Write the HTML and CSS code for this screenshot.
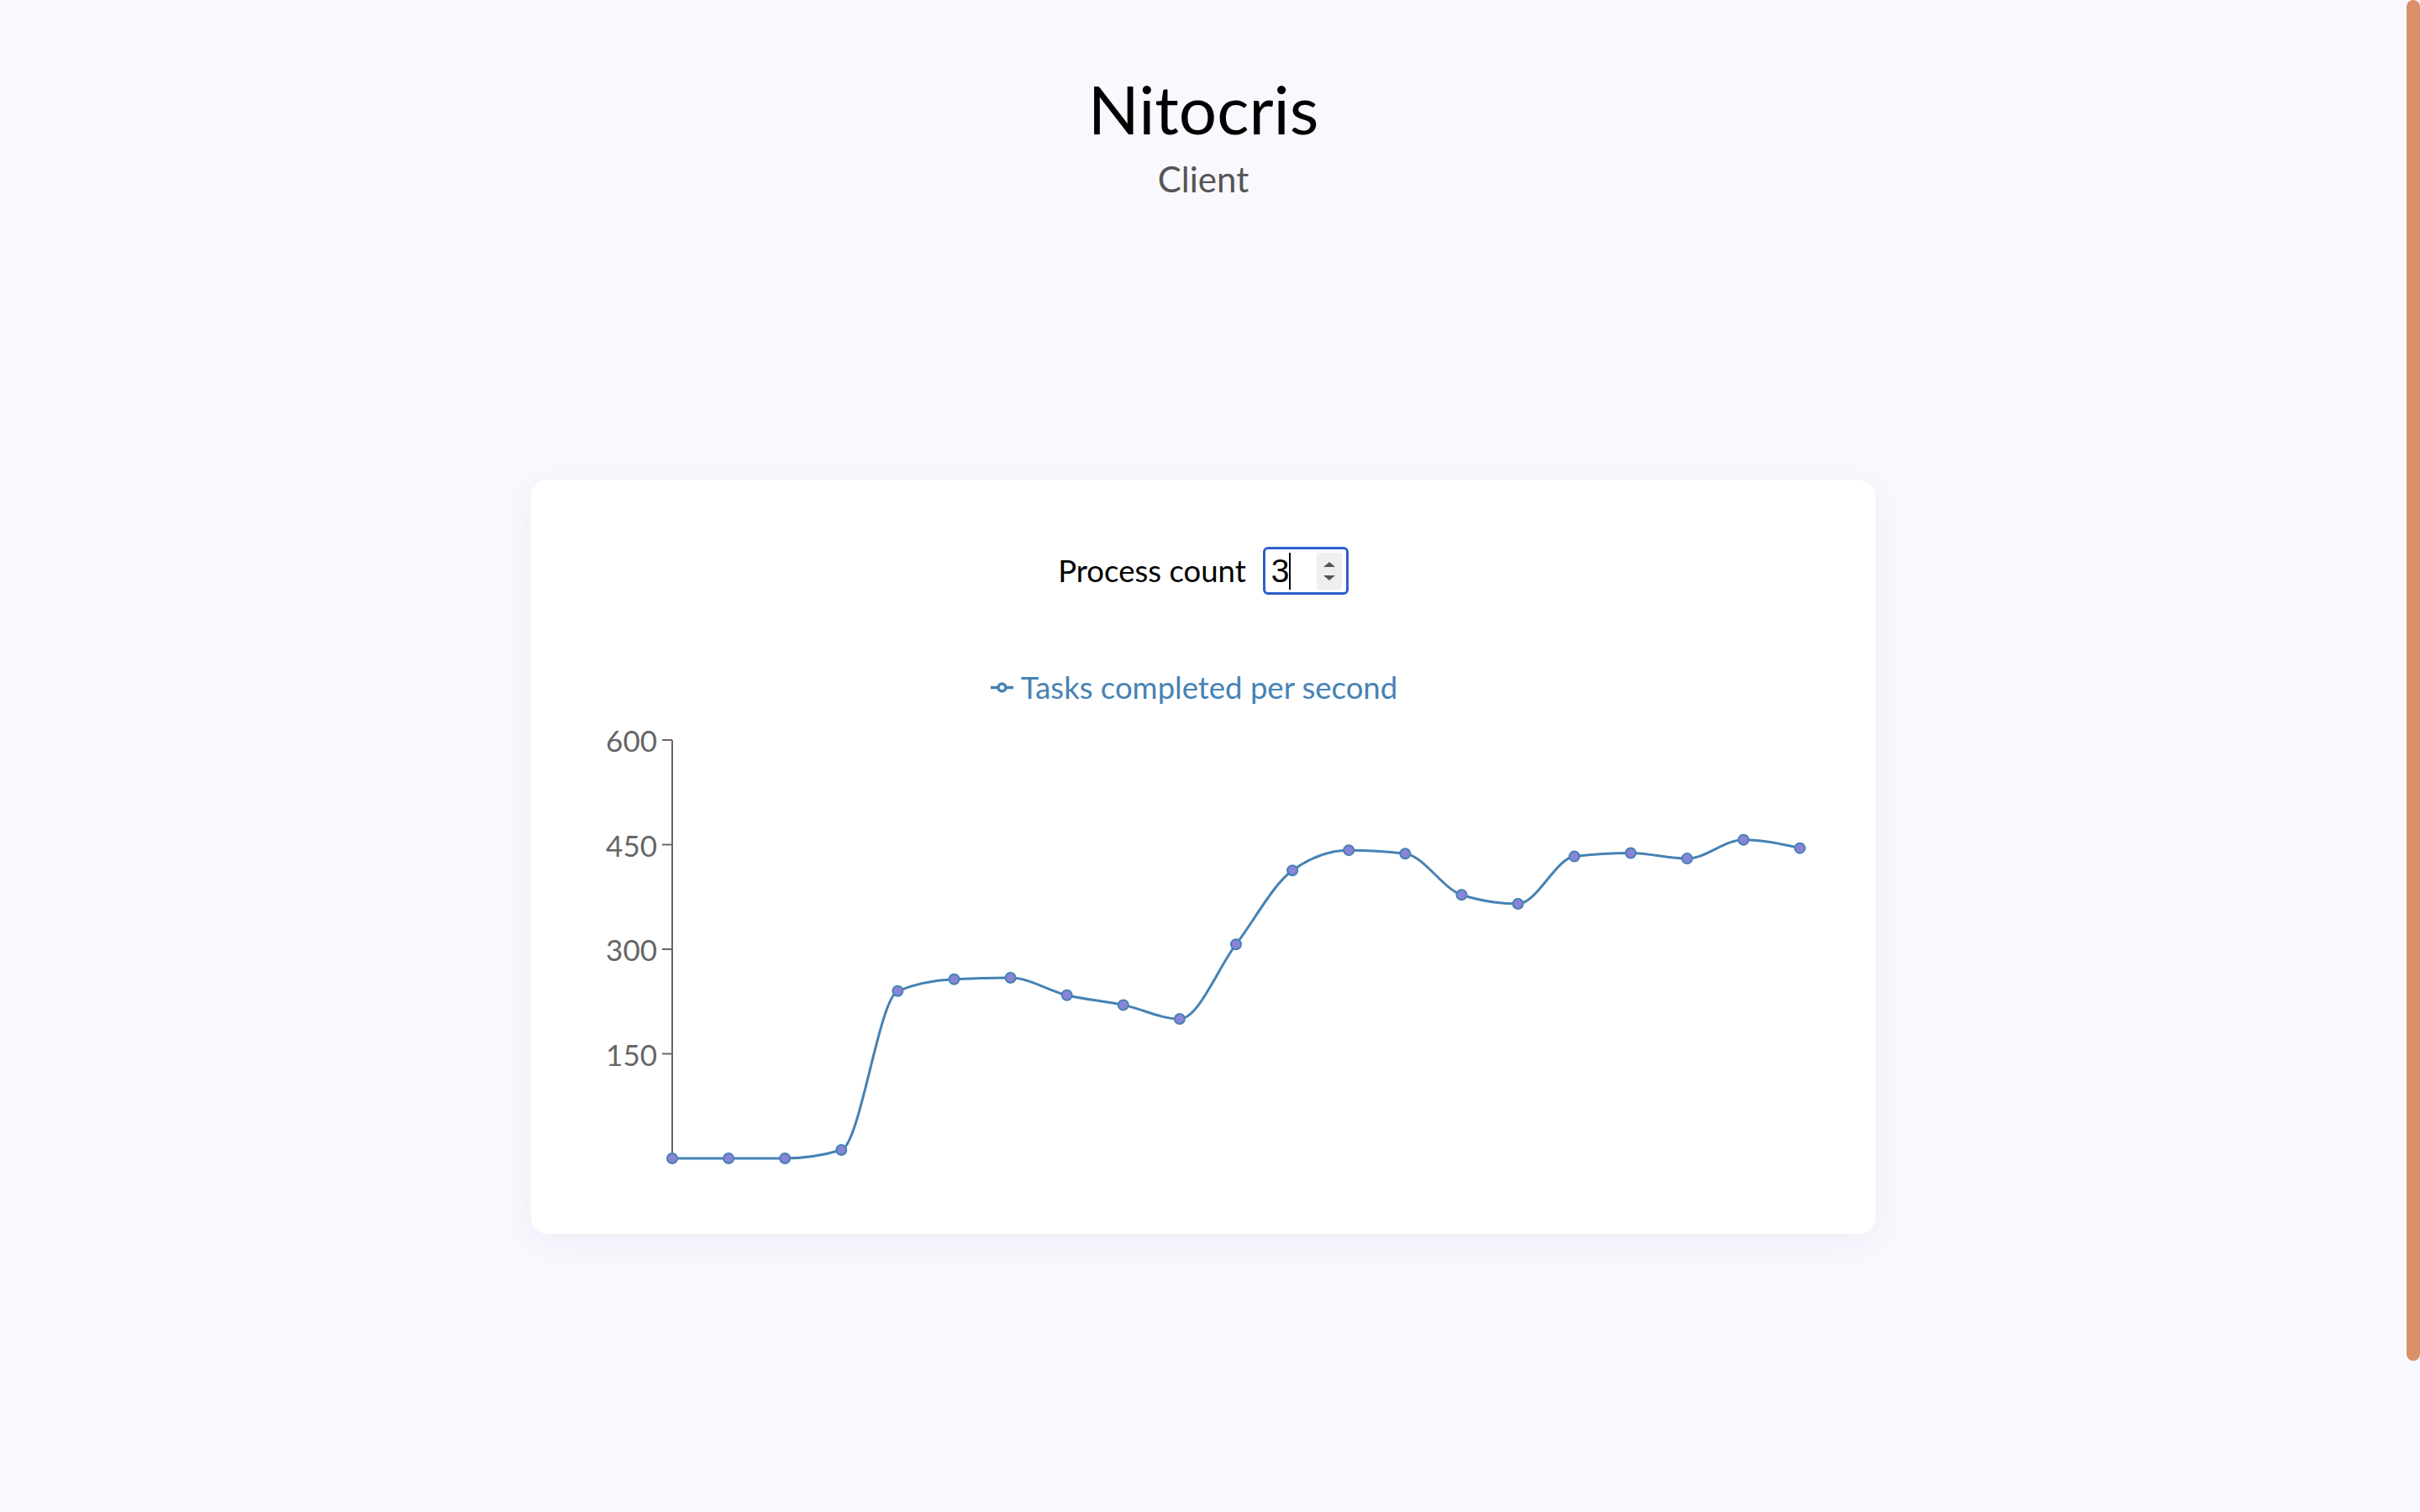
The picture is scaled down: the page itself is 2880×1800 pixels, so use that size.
FILE: index.html
```html
<!DOCTYPE html>
<html lang="en">
<head>
<meta charset="utf-8">
<title>Nitocris Client</title>
<link rel="stylesheet" href="styles.css">
</head>
<body>
<header class="header">
  <h1 class="title">Nitocris</h1>
  <p class="subtitle">Client</p>
</header>
<main class="main">
  <section class="card">
    <div class="control">
      <label class="control-label">Process count</label>
      <div class="number-input">
        <span class="number-value">3</span><span class="caret"></span>
        <span class="spinner"><span class="arrow arrow-up"></span><span class="arrow arrow-down"></span></span>
      </div>
    </div>
    <div class="legend">
      <svg class="legend-icon" width="27" height="27" viewBox="0 0 32 32"><path stroke-width="4" fill="none" stroke="#4682b4" d="M0,16h10.67A5.33,5.33,0,1,1,21.33,16H32M21.33,16A5.33,5.33,0,1,1,10.67,16"/></svg>
      <span class="legend-text">Tasks completed per second</span>
    </div>
    <svg class="chart" id="chart" width="1600" height="540" viewBox="0 0 1600 540">
      <g class="axis">
        <line x1="168" y1="22" x2="168" y2="521" class="axis-line"/>
        <line x1="156" y1="22" x2="168" y2="22" class="axis-line"/>
        <line x1="156" y1="146.5" x2="168" y2="146.5" class="axis-line"/>
        <line x1="156" y1="271" x2="168" y2="271" class="axis-line"/>
        <line x1="156" y1="395.5" x2="168" y2="395.5" class="axis-line"/>
        <text x="150" y="22" class="tick-label">600</text>
        <text x="150" y="146.5" class="tick-label">450</text>
        <text x="150" y="271" class="tick-label">300</text>
        <text x="150" y="395.5" class="tick-label">150</text>
      </g>
      <path id="series" class="series" d=""/>
      <g id="dots"></g>
    </svg>
  </section>
</main>
<div class="scroll-thumb" aria-hidden="true"></div>
<script src="script.js"></script>
</body>
</html>
```

FILE: styles.css
```css
html, body {
  margin: 0;
  padding: 0;
}
body {
  background: #f9f8fe;
  min-height: 2000px;
  padding-right: 16px;
  font-family: "Lato", "Noto Sans", sans-serif;
  color: #000;
}
.scroll-thumb {
  position: fixed;
  top: 0;
  right: 0;
  width: 16px;
  height: 1620px;
  background: #d98f68;
  border-radius: 8px;
}
.header {
  padding-top: 81px;
  text-align: center;
}
.title {
  margin: 0;
  font-family: "Lato", sans-serif;
  font-weight: 400;
  font-size: 80px;
  line-height: 1.2;
}
.subtitle {
  margin: 11px 0 0;
  font-size: 42px;
  line-height: 1.2;
  color: #555;
}
.main {
  padding-top: 333px;
  display: flex;
  justify-content: center;
}
.card {
  width: 1600px;
  box-sizing: border-box;
  background: #fff;
  border-radius: 20px;
  box-shadow: 0 10px 40px rgba(60, 50, 130, 0.06);
  padding: 80px 0 70px;
}
.control {
  display: flex;
  justify-content: center;
  align-items: center;
  gap: 20px;
}
.control-label {
  font-size: 36.5px;
  line-height: 1.2;
  color: #000;
}
.number-input {
  display: flex;
  align-items: center;
  width: 102px;
  height: 57px;
  box-sizing: border-box;
  border: 3px solid #2c5fcc;
  border-radius: 6px;
  padding: 0 5px 0 7px;
}
.number-value {
  font-family: "Liberation Sans", sans-serif;
  font-size: 39px;
  line-height: 1;
}
.caret {
  width: 2px;
  height: 44px;
  background: #000;
}
.spinner {
  margin-left: auto;
  width: 30px;
  height: 44px;
  background: #efefef;
  border-radius: 2px;
  display: flex;
  flex-direction: column;
  align-items: center;
  justify-content: center;
  gap: 10px;
}
.arrow {
  width: 0;
  height: 0;
  border-left: 7px solid transparent;
  border-right: 7px solid transparent;
}
.arrow-up {
  border-bottom: 6px solid #555;
}
.arrow-down {
  border-top: 6px solid #555;
}
.legend {
  margin-top: 88px;
  height: 44px;
  display: flex;
  justify-content: center;
  align-items: center;
  gap: 9px;
  padding-right: 22px;
}
.legend-text {
  font-size: 36.5px;
  line-height: 44px;
  color: #4682b4;
}
.chart {
  display: block;
  margin-top: 19px;
}
.axis-line {
  stroke: #666;
  stroke-width: 2;
}
.tick-label {
  font-family: "Lato", sans-serif;
  font-size: 35px;
  fill: #666;
  text-anchor: end;
  dominant-baseline: central;
}
.series {
  fill: none;
  stroke: #4682b4;
  stroke-width: 3;
}
.dot {
  fill: #8884d8;
  stroke: #4682b4;
  stroke-width: 2;
}
```

FILE: script.js
```js
(function () {
  var vals = [0, 0, 0, 12, 240, 257, 259, 234, 220, 200, 307, 413, 442, 437, 378, 365, 433, 438, 430, 457, 445];
  var pts = vals.map(function (v, i) { return [168 + i * 67.1, 520 - 0.83 * v]; });
  var n = pts.length;
  function sign(x) { return x < 0 ? -1 : 1; }
  var t = new Array(n);
  for (var i = 1; i < n - 1; i++) {
    var x0 = pts[i - 1][0], y0 = pts[i - 1][1], x1 = pts[i][0], y1 = pts[i][1], x2 = pts[i + 1][0], y2 = pts[i + 1][1];
    var h0 = x1 - x0, h1 = x2 - x1, s0 = (y1 - y0) / h0, s1 = (y2 - y1) / h1, p = (s0 * h1 + s1 * h0) / (h0 + h1);
    t[i] = (sign(s0) + sign(s1)) * Math.min(Math.abs(s0), Math.abs(s1), 0.5 * Math.abs(p)) || 0;
  }
  var hA = pts[1][0] - pts[0][0];
  t[0] = (3 * (pts[1][1] - pts[0][1]) / hA - t[1]) / 2;
  var hB = pts[n - 1][0] - pts[n - 2][0];
  t[n - 1] = (3 * (pts[n - 1][1] - pts[n - 2][1]) / hB - t[n - 2]) / 2;
  var d = 'M' + pts[0][0] + ',' + pts[0][1];
  for (var j = 0; j < n - 1; j++) {
    var a = pts[j], b = pts[j + 1], dx = (b[0] - a[0]) / 3;
    d += 'C' + (a[0] + dx) + ',' + (a[1] + dx * t[j]) + ',' + (b[0] - dx) + ',' + (b[1] - dx * t[j + 1]) + ',' + b[0] + ',' + b[1];
  }
  document.getElementById('series').setAttribute('d', d);
  var g = document.getElementById('dots');
  var ns = 'http://www.w3.org/2000/svg';
  pts.forEach(function (pt) {
    var c = document.createElementNS(ns, 'circle');
    c.setAttribute('cx', pt[0]);
    c.setAttribute('cy', pt[1]);
    c.setAttribute('r', 6);
    c.setAttribute('class', 'dot');
    g.appendChild(c);
  });
})();
```
